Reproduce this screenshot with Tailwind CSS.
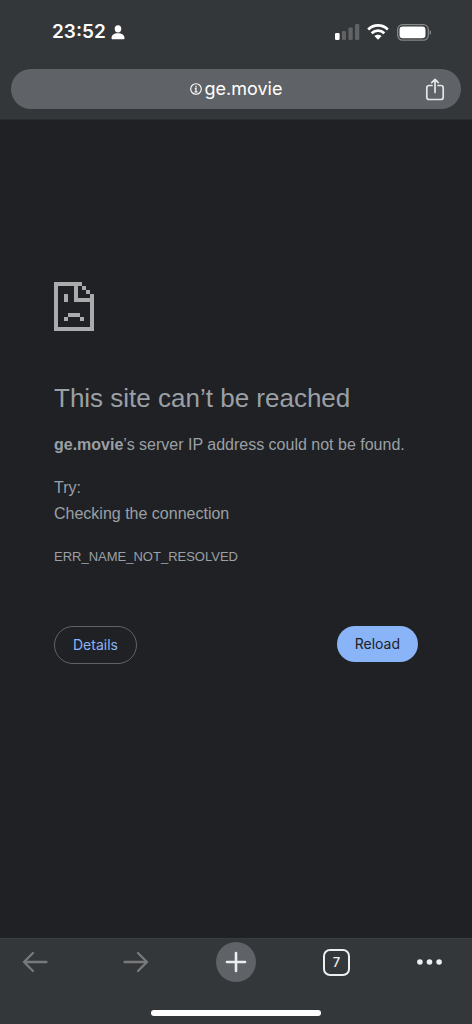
<!DOCTYPE html>
<html lang="en">
<head>
<meta charset="utf-8">
<meta name="viewport" content="width=device-width, initial-scale=1">
<title>ge.movie</title>
<script src="https://cdn.jsdelivr.net/npm/@tailwindcss/browser@4"></script>
</head>
<body class="flex min-h-screen flex-col bg-[#202124] font-['Liberation_Sans',Arial,sans-serif] text-[#9aa0a6]">
  <header class="flex flex-col border-b border-[#2b2d30] bg-[#343739] px-[11px] pt-5 pb-[10px] text-white">
    <div class="flex h-6 items-center justify-between pr-[29px] pl-[41px]">
      <div class="flex items-center gap-[5px]">
        <time class="font-['Inter',sans-serif] text-[19px] leading-6 font-semibold">23:52</time>
        <svg class="h-[15px] w-[14px]" viewBox="0 0 14 15" fill="currentColor" aria-hidden="true"><ellipse cx="7" cy="3.8" rx="3.3" ry="3.6"/><path d="M.5 13C.5 10 3 8.3 7 8.3s6.500 1.700 6.500 4.700c0 1-.4 1.300-1.300 1.300H1.800C.9 14.300.5 14 .5 13Z"/></svg>
      </div>
      <div class="flex items-center gap-[7px]">
        <svg class="h-4 w-[25px]" viewBox="0 0 25 16" aria-label="Signal strength" role="img"><rect x="0" y="9" width="4.600" height="7" rx="1.300" fill="#fff"/><g fill="#606264"><rect x="7" y="7" width="4" height="9" rx="1.200"/><rect x="13.400" y="3.500" width="4.300" height="12.500" rx="1.200"/><rect x="20" y="0" width="4.300" height="16" rx="1.200"/></g></svg>
        <svg class="h-4 w-[22px]" viewBox="0 0 22 16" fill="none" stroke="#fff" stroke-width="2.800" aria-label="Wi-Fi" role="img"><path d="M1.200 5.500C6.800.1 15.200.1 20.800 5.500"/><path d="M4.700 9.200c3.600-3.400 9-3.400 12.600 0"/><path d="M7.400 12 11 15.800 14.600 12C12.600 10.200 9.400 10.200 7.400 12Z" fill="#fff" stroke="none"/></svg>
        <svg class="h-[17px] w-9" viewBox="0 0 36 17" aria-label="Battery" role="img"><rect x="1.700" y=".7" width="30.600" height="15.400" rx="4.800" fill="none" stroke="#858789" stroke-width="1.300"/><rect x="3.500" y="2.500" width="26" height="11.800" rx="3.300" fill="#fff"/><path d="M33.600 6c2 .7 2 4.300 0 5Z" fill="#858789"/></svg>
      </div>
    </div>
    <div class="mt-[25px] grid h-10 grid-cols-[1fr_auto_1fr] items-center rounded-full bg-[#5f6367] px-3">
      <span></span>
      <button type="button" class="flex items-center gap-[3px] font-['Inter',sans-serif] text-lg leading-6">
        <svg class="size-3" viewBox="0 0 12 12" fill="none" stroke="#fff" aria-hidden="true"><circle cx="6" cy="6" r="5.300" stroke-width="1.100"/><path d="M6 2.800v1.400M4.800 5.400H6v3.200M4.600 8.800h2.800" stroke-width="1.200"/></svg>
        <span>ge.movie</span>
      </button>
      <button type="button" aria-label="Share" class="justify-self-end p-1">
        <svg class="h-[23px] w-5" viewBox="0 0 20 23" fill="none" stroke="#e4e6e8" stroke-width="1.700" stroke-linecap="round" stroke-linejoin="round"><path d="M7 7.500H4.200Q1.800 7.500 1.800 9.800v9.400q0 2.300 2.400 2.300h11.600q2.400 0 2.400-2.300V9.800q0-2.300-2.400-2.300H13M10 14.500V1.500M6.700 4.700 10 1.400l3.300 3.300"/></svg>
      </button>
    </div>
  </header>

  <main class="flex-1 px-[54px] pt-[162px]">
    <svg class="h-[49px] w-10" viewBox="0 0 40 49" fill="#aaabad" shape-rendering="crispEdges" aria-hidden="true"><path d="M0 0h28v4H0zM0 4h4v45H0zM4 45h36v4H4zM36 12h4v33h-4zM20 4h4v16h-4zM24 16h12v4H24zM28 4h4v4h-4zM32 8h4v4h-4zM10 12h4v8h-4zM14 31h12v4H14zM10 35h4v4h-4zM26 35h4v4h-4z"/></svg>
    <h1 class="mt-[51px] text-[26px] leading-8">This site can’t be reached</h1>
    <p class="mt-[18px] text-[16px] leading-[26px] whitespace-nowrap"><strong>ge.movie</strong>’s server IP address could not be found.</p>
    <p class="mt-[17px] text-[16px] leading-[26px]">Try:</p>
    <p class="text-[16px] leading-[26px]">Checking the connection</p>
    <p class="mt-[17px] text-[13px] leading-[26px]">ERR_NAME_NOT_RESOLVED</p>
    <div class="mt-[56px] flex items-start justify-between font-['Inter',sans-serif] text-sm">
      <button type="button" class="h-[38px] rounded-full border border-[#5f6368] px-[18px] text-[#8ab4f8]">Details</button>
      <button type="button" class="h-9 rounded-full bg-[#8ab4f8] px-[18px] text-[#202124]">Reload</button>
    </div>
  </main>

  <footer class="border-t border-[#3b3d40] bg-[#343739] pt-[3px] pb-2">
    <nav class="flex h-10 items-center justify-between px-[15px]" aria-label="Browser toolbar">
      <button type="button" aria-label="Back" class="flex size-10 items-center justify-center"><svg class="h-[22px] w-[26px]" viewBox="0 0 26 22" fill="none" stroke="#77797b" stroke-width="2.300" stroke-linecap="round" stroke-linejoin="round"><path d="M24.500 11H2M11 2 2 11l9 9"/></svg></button>
      <button type="button" aria-label="Forward" class="flex size-10 items-center justify-center"><svg class="h-[22px] w-[26px]" viewBox="0 0 26 22" fill="none" stroke="#77797b" stroke-width="2.300" stroke-linecap="round" stroke-linejoin="round"><path d="M1.500 11H24M15 2l9 9-9 9"/></svg></button>
      <button type="button" aria-label="New tab" class="flex size-10 items-center justify-center rounded-full bg-[#5f6367]"><svg class="size-[22px]" viewBox="0 0 22 22" stroke="#eceef0" stroke-width="2.600" stroke-linecap="round"><path d="M11 2v18M2 11h18"/></svg></button>
      <button type="button" aria-label="7 open tabs" class="flex size-10 items-center justify-center"><span class="flex size-[27px] items-center justify-center rounded-[7px] border-2 border-[#eceef0] font-['Inter',sans-serif] text-[13px] leading-4 font-medium text-[#eceef0]">7</span></button>
      <button type="button" aria-label="Menu" class="flex size-10 items-center justify-start"><svg class="h-[6px] w-[25px]" viewBox="0 0 25 6" fill="#eceef0"><circle cx="2.900" cy="3" r="2.800"/><circle cx="12.500" cy="3" r="2.800"/><circle cx="22.100" cy="3" r="2.800"/></svg></button>
    </nav>
    <div class="mx-auto mt-7 h-[6px] w-[36%] rounded-full bg-white"></div>
  </footer>
</body>
</html>
